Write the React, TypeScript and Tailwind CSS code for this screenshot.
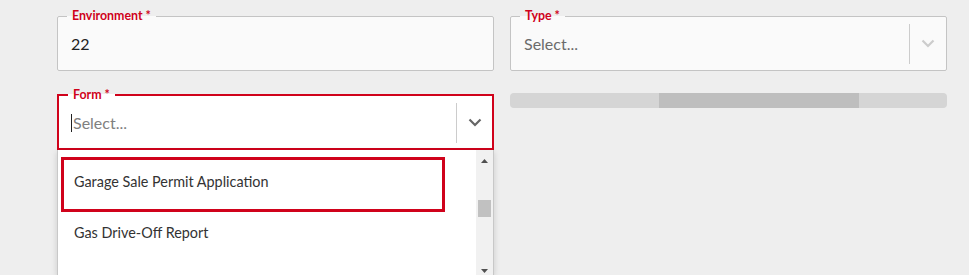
import React from 'react';

const Chevron: React.FC<{ className?: string }> = ({ className }) => (
  <svg width="14" height="9" viewBox="0 0 14 9" className={className}>
    <path d="M1.5 1.5 L7 7 L12.5 1.5" fill="none" stroke="currentColor" strokeWidth="2.2" />
  </svg>
);

const Legend: React.FC<{ text: string }> = ({ text }) => (
  <legend className="ml-[9px] px-[5px] text-[12.4px] leading-[14px] font-bold text-[#d0021b]">{text}</legend>
);

const App: React.FC = () => {
  return (
    <div className="min-h-screen bg-[#eeeeee] pt-[9px] pl-[57px] pr-[22px] font-['Lato','Open_Sans',sans-serif]">
      <div className="grid grid-cols-2 gap-x-4">
        <fieldset className="border border-[#c4c4c4] rounded-[2px] bg-[#fafafa]">
          <Legend text="Environment *" />
          <div className="h-[47px] flex items-center px-[13px] pb-[6px] text-[16px] text-[#222]">22</div>
        </fieldset>

        <fieldset className="border border-[#c4c4c4] rounded-[2px] bg-[#fafafa]">
          <Legend text="Type *" />
          <div className="h-[47px] flex items-center pb-[6px]">
            <span className="flex-1 px-[13px] text-[16px] text-[#6b6b6b]">Select...</span>
            <div className="w-px h-[40px] bg-[#cccccc]"></div>
            <div className="w-[36px] flex justify-center text-[#cccccc]"><Chevron /></div>
          </div>
        </fieldset>
      </div>

      <div className="grid grid-cols-2 gap-x-4 mt-[17px]">
        <div className="relative">
          <fieldset className="border-2 border-[#d0021b] bg-white">
            <Legend text="Form *" />
            <div className="h-[46px] flex items-center pb-[5px]">
              <span className="flex-1 flex items-center px-[12px] text-[16px] text-[#808080]">
                <span className="w-px h-[18px] bg-[#222] mr-[1px]"></span>Select...
              </span>
              <div className="w-px h-[40px] bg-[#cccccc]"></div>
              <div className="w-[35px] flex justify-center text-[#666666]"><Chevron /></div>
            </div>
          </fieldset>

          <div className="absolute left-0 top-full w-[437px] h-[125px] bg-white border-x border-[#c8c8c8] shadow-[0_2px_6px_rgba(0,0,0,0.15)] flex">
            <div className="flex-1 pt-[7px] pl-[3px] text-[14.4px] text-[#333]">
              <div className="w-[384px] h-[55px] border-[3px] border-[#d0021b] flex items-center px-[10px] pb-[6px]">
                Garage Sale Permit Application
              </div>
              <div className="h-[41px] flex items-center px-[13px]">Gas Drive-Off Report</div>
            </div>
            <div className="w-[17px] bg-[#f1f1f1] flex flex-col items-center">
              <svg width="7" height="4" viewBox="0 0 7 4" className="mt-[9px]"><path d="M0 4 L3.5 0 L7 4 Z" fill="#505050" /></svg>
              <div className="w-[13px] h-[17px] bg-[#c1c1c1] mt-[37px]"></div>
              <svg width="7" height="4" viewBox="0 0 7 4" className="mt-[52px]"><path d="M0 0 L7 0 L3.5 4 Z" fill="#505050" /></svg>
            </div>
          </div>
        </div>

        <div className="pt-[5px]">
          <div className="h-[15px] rounded-[4px] bg-[#d5d5d5] flex">
            <div className="w-[149px]"></div>
            <div className="w-[200px] bg-[#bebebe]"></div>
          </div>
        </div>
      </div>
    </div>
  );
};

export default App;
